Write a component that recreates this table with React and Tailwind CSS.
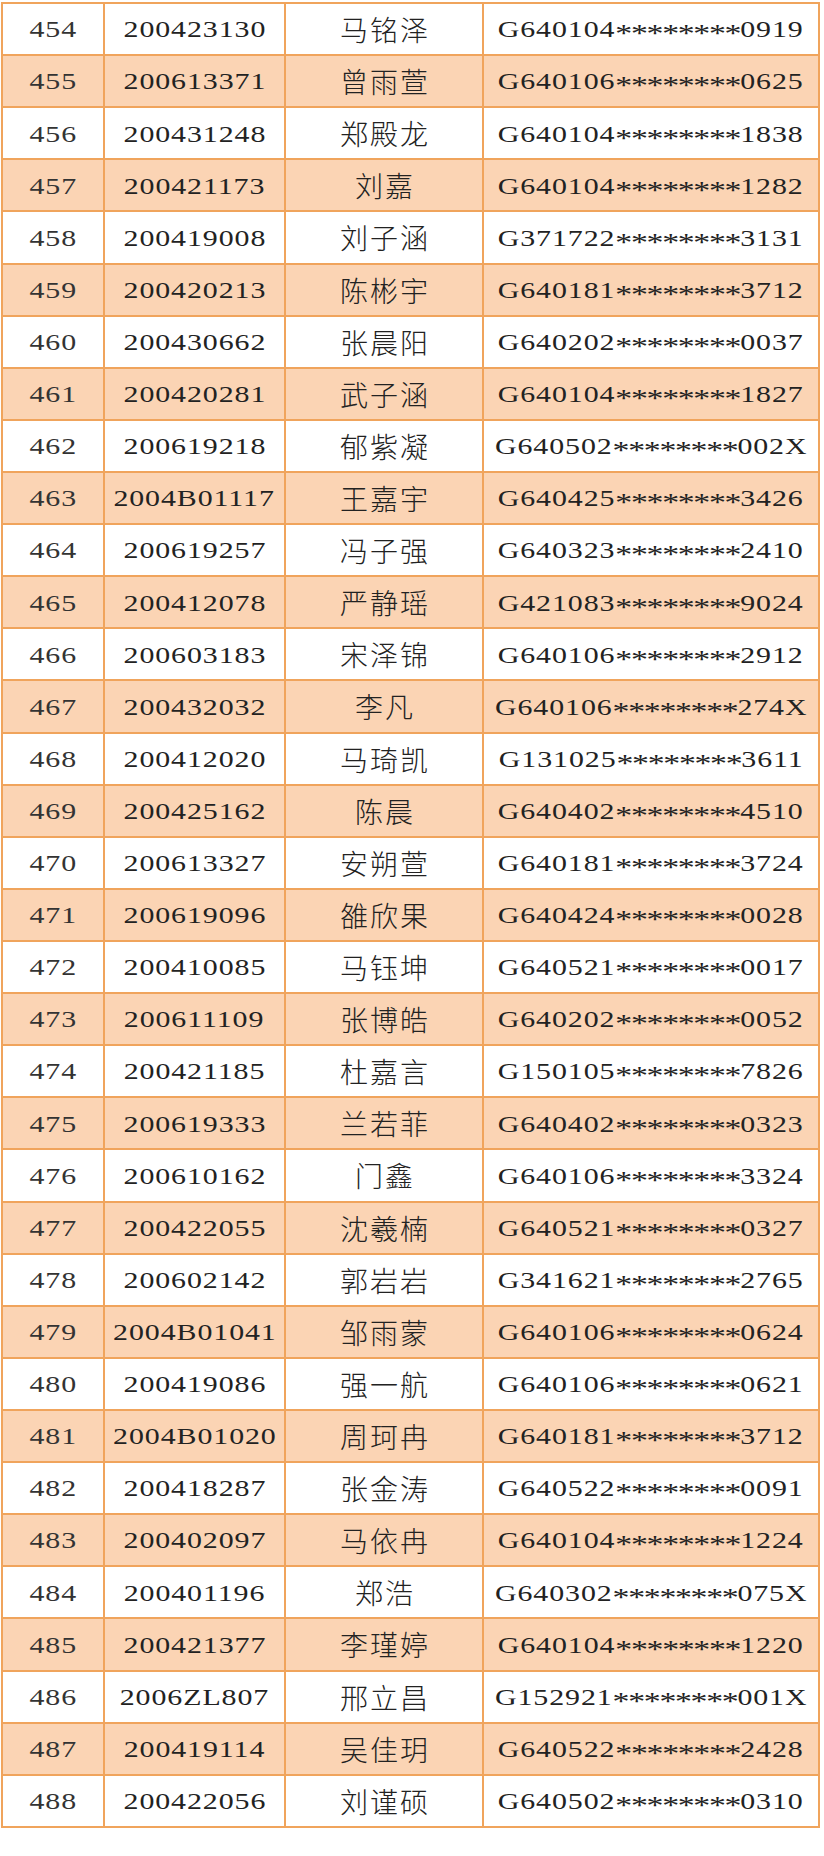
import React from 'react'

const rows = [
  ['454', '200423130', '马铭泽', 'G640104********0919'],
  ['455', '200613371', '曾雨萱', 'G640106********0625'],
  ['456', '200431248', '郑殿龙', 'G640104********1838'],
  ['457', '200421173', '刘嘉', 'G640104********1282'],
  ['458', '200419008', '刘子涵', 'G371722********3131'],
  ['459', '200420213', '陈彬宇', 'G640181********3712'],
  ['460', '200430662', '张晨阳', 'G640202********0037'],
  ['461', '200420281', '武子涵', 'G640104********1827'],
  ['462', '200619218', '郁紫凝', 'G640502********002X'],
  ['463', '2004B01117', '王嘉宇', 'G640425********3426'],
  ['464', '200619257', '冯子强', 'G640323********2410'],
  ['465', '200412078', '严静瑶', 'G421083********9024'],
  ['466', '200603183', '宋泽锦', 'G640106********2912'],
  ['467', '200432032', '李凡', 'G640106********274X'],
  ['468', '200412020', '马琦凯', 'G131025********3611'],
  ['469', '200425162', '陈晨', 'G640402********4510'],
  ['470', '200613327', '安朔萱', 'G640181********3724'],
  ['471', '200619096', '雒欣果', 'G640424********0028'],
  ['472', '200410085', '马钰坤', 'G640521********0017'],
  ['473', '200611109', '张博皓', 'G640202********0052'],
  ['474', '200421185', '杜嘉言', 'G150105********7826'],
  ['475', '200619333', '兰若菲', 'G640402********0323'],
  ['476', '200610162', '门鑫', 'G640106********3324'],
  ['477', '200422055', '沈羲楠', 'G640521********0327'],
  ['478', '200602142', '郭岩岩', 'G341621********2765'],
  ['479', '2004B01041', '邹雨蒙', 'G640106********0624'],
  ['480', '200419086', '强一航', 'G640106********0621'],
  ['481', '2004B01020', '周珂冉', 'G640181********3712'],
  ['482', '200418287', '张金涛', 'G640522********0091'],
  ['483', '200402097', '马依冉', 'G640104********1224'],
  ['484', '200401196', '郑浩', 'G640302********075X'],
  ['485', '200421377', '李瑾婷', 'G640104********1220'],
  ['486', '2006ZL807', '邢立昌', 'G152921********001X'],
  ['487', '200419114', '吴佳玥', 'G640522********2428'],
  ['488', '200422056', '刘谨硕', 'G640502********0310'],
]

const Wide = ({ children, cls = '' }) => (
  <span className={"inline-block font-['Liberation_Serif',serif] text-[23px] tracking-[0.7px] scale-x-[1.3] " + cls}>
    {children}
  </span>
)

const IdNo = ({ value }) => {
  const head = value.slice(0, 7)
  const tail = value.slice(15)
  return (
    <Wide>
      {head}
      <span className="text-[26px] leading-[0] tracking-[-1px] align-[-5px] font-light">********</span>
      {tail}
    </Wide>
  )
}

const App = () => {
  return (
    <div className="w-[824px] h-[1856px] bg-white text-[#222]">
      <div className="ml-[1px] pt-[2px] w-[819px]">
        <div className="h-[1826px] flex flex-col border-t-2 border-l-2 border-[#f0a45c]">
          {rows.map((r, i) => (
            <div
              key={r[0]}
              className={'flex-1 flex border-b-2 border-[#f0a45c] ' + (i % 2 === 1 ? 'bg-[#fbd4b4]' : 'bg-white')}
            >
              <div className="w-[102px] flex items-center justify-center border-r-2 border-[#f0a45c] pt-[3px]">
                <Wide cls="text-[#333]">{r[0]}</Wide>
              </div>
              <div className="w-[181px] flex items-center justify-center border-r-2 border-[#f0a45c] pt-[3px]">
                <Wide>{r[1]}</Wide>
              </div>
              <div className="w-[198px] flex items-center justify-center border-r-2 border-[#f0a45c] font-['Noto_Sans_CJK_SC',sans-serif] text-[28px] font-light tracking-[2px] pl-[2px]">
                {r[2]}
              </div>
              <div className="w-[336px] flex items-center justify-center border-r-2 border-[#f0a45c] pt-[3px]">
                <IdNo value={r[3]} />
              </div>
            </div>
          ))}
        </div>
      </div>
    </div>
  )
}

export default App
